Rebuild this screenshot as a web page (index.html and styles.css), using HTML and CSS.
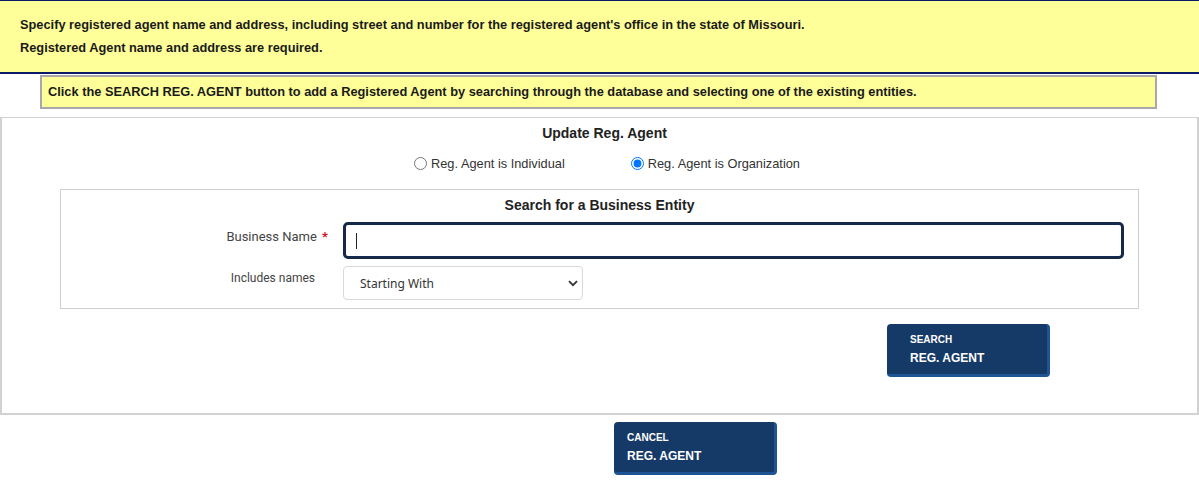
FILE: index.html
```html
<!DOCTYPE html>
<html lang="en">
<head>
<meta charset="utf-8">
<title>Update Reg. Agent</title>
<link rel="stylesheet" href="styles.css">
</head>
<body>
  <div class="notice">
    <div class="notice-line">Specify registered agent name and address, including street and number for the registered agent's office in the state of Missouri.</div>
    <div class="notice-line">Registered Agent name and address are required.</div>
  </div>

  <div class="hint">Click the SEARCH REG. AGENT button to add a Registered Agent by searching through the database and selecting one of the existing entities.</div>

  <div class="panel">
    <div class="panel-title">Update Reg. Agent</div>
    <div class="agent-type">
      <label class="radio-opt"><input type="radio" name="agentType" value="individual"><span>Reg. Agent is Individual</span></label>
      <label class="radio-opt"><input type="radio" name="agentType" value="organization" checked><span>Reg. Agent is Organization</span></label>
    </div>

    <div class="search-box">
      <div class="search-title">Search for a Business Entity</div>
      <div class="form-grid">
        <label class="field-label" for="bizName">Business Name <span class="req">*</span></label>
        <div class="input-wrap">
          <input id="bizName" class="text-input" type="text">
          <span class="caret"></span>
        </div>
        <label class="field-label field-label-plain" for="incNames">Includes names</label>
        <div class="select-wrap">
          <select id="incNames" class="select-input">
            <option>Starting With</option>
            <option>Containing</option>
            <option>Exact Match</option>
          </select>
          <svg class="chevron" width="10" height="7" viewBox="0 0 10 7"><path d="M1 1.2 5 5.2 9 1.2" fill="none" stroke="#333" stroke-width="1.8"/></svg>
        </div>
      </div>
    </div>

    <div class="search-row">
      <button class="action-btn" type="button"><span class="btn-small">SEARCH</span><span class="btn-big">REG. AGENT</span></button>
    </div>
  </div>

  <div class="cancel-row">
    <button class="action-btn action-btn-tight" type="button"><span class="btn-small">CANCEL</span><span class="btn-big">REG. AGENT</span></button>
  </div>
</body>
</html>
```

FILE: styles.css
```css
html, body {
  margin: 0;
  padding: 0;
  background: #ffffff;
}

body {
  font-family: "Liberation Sans", Arial, sans-serif;
  color: #222;
}

/* yellow requirement banner */
.notice {
  background: #ffff99;
  border-top: 1px solid #0b1a66;
  border-bottom: 2px solid #0b1a66;
  padding: 12px 20px 13px;
  font-size: 12.8px;
  font-weight: bold;
  color: #1a1a1a;
}

.notice-line {
  line-height: 23px;
}

/* instruction strip */
.hint {
  margin: 1px 0 0 40px;
  width: 1107px;
  background: #ffff99;
  border: 2px solid #a8a8a8;
  padding: 0 0 0 6px;
  height: 30px;
  line-height: 30px;
  font-size: 12.8px;
  font-weight: bold;
  color: #1a1a1a;
  box-sizing: content-box;
}

/* main form panel */
.panel {
  margin-top: 8px;
  border: 2px solid #d2d2d2;
  border-top-width: 1px;
  padding: 6px 0 36px;
}

.panel-title {
  text-align: center;
  font-size: 14px;
  font-weight: bold;
  line-height: 18px;
  padding-left: 10px;
}

.agent-type {
  display: flex;
  gap: 66px;
  justify-content: center;
  margin-top: 14px;
  padding-left: 15px;
  font-size: 12.8px;
  color: #333;
}

.radio-opt {
  display: flex;
  align-items: center;
  gap: 4px;
}

.radio-opt input {
  margin: 0;
  width: 13px;
  height: 13px;
}

.search-box {
  margin: 18px 58px 0 58px;
  border: 1px solid #cfcfcf;
  padding: 6px 14px 8px 0;
}

.search-title {
  text-align: center;
  font-size: 14px;
  font-weight: bold;
  line-height: 18px;
  padding-left: 14px;
}

.form-grid {
  display: grid;
  grid-template-columns: 267px 1fr;
  column-gap: 15px;
  row-gap: 7px;
  margin-top: 8px;
}

.field-label {
  text-align: right;
  font-family: Roboto, "Noto Sans", sans-serif;
  font-size: 13px;
  color: #444;
  padding-top: 6px;
  line-height: 18px;
}

.field-label-plain {
  font-size: 12px;
  padding-right: 13px;
  padding-top: 3px;
}

.req {
  color: #d0111b;
  font-weight: bold;
  margin-left: 2px;
}

.input-wrap {
  position: relative;
}

.text-input {
  display: block;
  width: 100%;
  box-sizing: border-box;
  height: 37px;
  border: 3px solid #152a4a;
  border-radius: 5px;
  padding: 0 12px;
  font-size: 13px;
  outline: none;
  background: #fff;
}

/* focused text cursor */
.caret {
  position: absolute;
  left: 13px;
  top: 11px;
  width: 1px;
  height: 16px;
  background: #222;
}

.select-wrap {
  position: relative;
  width: 240px;
}

.select-input {
  display: block;
  width: 100%;
  height: 34px;
  box-sizing: border-box;
  border: 1px solid #d9d9d9;
  border-radius: 4px;
  background: #fff;
  padding: 0 0 0 16px;
  font-family: "Noto Sans", "Open Sans", sans-serif;
  font-size: 12px;
  color: #333;
  -webkit-appearance: none;
  appearance: none;
}

.chevron {
  position: absolute;
  right: 5px;
  top: 14px;
  pointer-events: none;
}

.search-row {
  display: flex;
  padding-left: 885px;
  margin-top: 15px;
}

.cancel-row {
  display: flex;
  padding-left: 614px;
  margin-top: 7px;
}

.action-btn {
  width: 163px;
  height: 53px;
  box-sizing: border-box;
  background: #163a67;
  border: none;
  border-right: 3px solid #1f5494;
  border-bottom: 3px solid #1f5494;
  border-radius: 4px;
  color: #fff;
  font-family: "Liberation Sans", Arial, sans-serif;
  font-weight: bold;
  text-align: left;
  padding: 9px 0 0 23px;
  display: flex;
  flex-direction: column;
  align-items: flex-start;
  cursor: pointer;
}

.action-btn-tight {
  padding-left: 13px;
}

.btn-small {
  font-size: 10px;
  line-height: 14px;
}

.btn-big {
  font-size: 12px;
  line-height: 22px;
}
```
